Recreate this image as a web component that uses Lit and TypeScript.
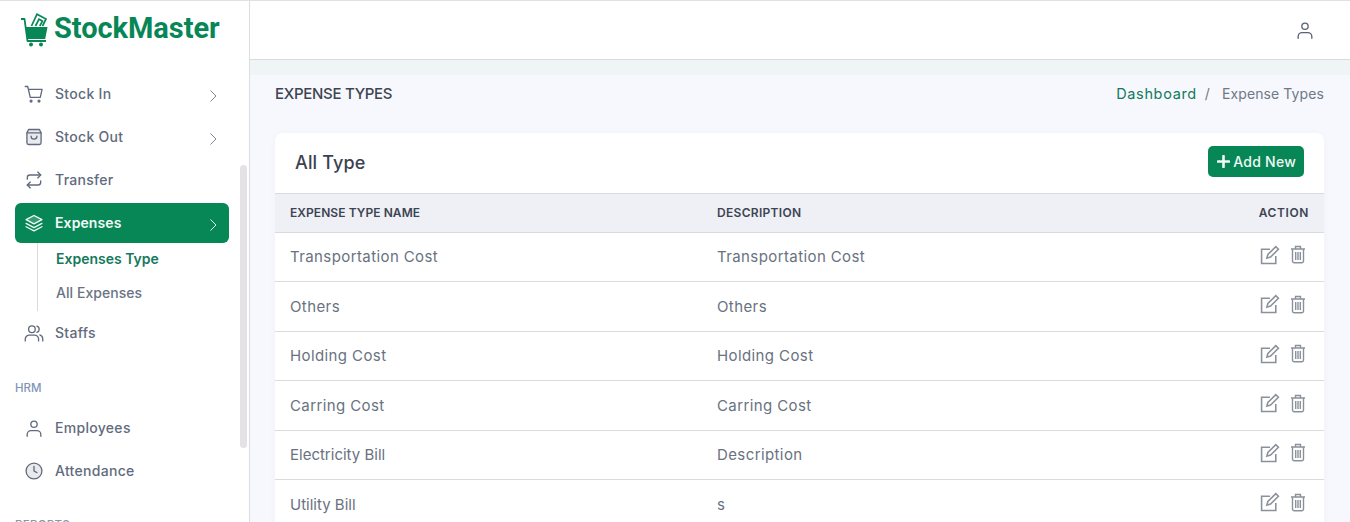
import { LitElement, html, css, svg } from "lit";
import { customElement } from "lit/decorators.js";

const s = (body: unknown, size = 20) => html`<svg width=${size} height=${size} viewBox="0 0 24 24" fill="none" stroke="currentColor" stroke-width="1.6" stroke-linecap="round" stroke-linejoin="round">${body}</svg>`;

const icons: Record<string, unknown> = {
  cart: svg`<path d="M1.500 3h3l3 13h12l2.200-9.500H5.400"/><circle cx="8.500" cy="20.500" r="1.100" fill="currentColor"/><circle cx="18" cy="20.500" r="1.100" fill="currentColor"/>`,
  bag: svg`<path d="M5.500 3h13l2 4v12a2 2 0 0 1-2 2h-13a2 2 0 0 1-2-2V7z" fill="currentColor" fill-opacity=".14"/><path d="M3.500 7h17"/><path d="M8.500 11a3.500 3.500 0 0 0 7 0"/>`,
  swap: svg`<path d="M4 11V9a3 3 0 0 1 3-3h13"/><path d="M16.500 2.500 20 6l-3.500 3.500"/><path d="M20 13v2a3 3 0 0 1-3 3H4"/><path d="M7.500 14.500 4 18l3.500 3.500"/>`,
  layers: svg`<path d="M12 3 2.500 8l9.500 5 9.500-5z" fill="currentColor" fill-opacity=".2"/><path d="m2.500 12.500 9.500 5 9.500-5"/><path d="m2.500 16.500 9.500 5 9.500-5"/>`,
  users: svg`<circle cx="9.500" cy="7.500" r="4"/><path d="M1.500 21.500v-2a5 5 0 0 1 5-5h6a5 5 0 0 1 5 5v2"/><path d="M15.500 3.700a4 4 0 0 1 0 7.600"/><path d="M19 14.300a5 5 0 0 1 3.500 4.700v2.500"/>`,
  user: svg`<circle cx="12" cy="7.500" r="3.800"/><path d="M3.800 22v-2a4.800 4.800 0 0 1 4.800-4.800h6.800a4.800 4.800 0 0 1 4.800 4.800v2"/>`,
  clock: svg`<circle cx="12" cy="12" r="9.500" fill="currentColor" fill-opacity=".14"/><path d="M12 6.500V12l3.500 2"/>`,
  chev: svg`<path d="m9 5 7 7-7 7"/>`,
};

const rows = [
  ["Transportation Cost", "Transportation Cost", false],
  ["Others", "Others", false],
  ["Holding Cost", "Holding Cost", false],
  ["Carring Cost", "Carring Cost", false],
  ["Electricity Bill", "Description", true],
  ["Utility Bill", "s", true],
];

@customElement("app-root")
export class AppRoot extends LitElement {
  static styles = css`
    :host { display: block; height: 522px; overflow: hidden; font-family: "Inter", "Liberation Sans", sans-serif; color: #5d6779; background: #f6f8fd; }
    .app { display: flex; height: 522px; border-top: 1px solid #dfe1e3; box-sizing: border-box; }
    .side { position: relative; width: 250px; flex: none; background: #fff; border-right: 1px solid #dcdde1; box-sizing: border-box; overflow: hidden; }
    .logo { display: flex; align-items: center; gap: 4px; padding: 9px 0 0 20px; height: 41px; color: #078656; }
    .logo span { font: 700 29px/1 "Roboto", sans-serif; letter-spacing: -.05px; transform: translateY(-2px); }
    .nav { display: flex; flex-direction: column; padding: 23px 20px 0 15px; }
    .item { display: flex; align-items: center; height: 40px; margin-bottom: 3px; padding: 0 10px 0 9px; border-radius: 6px; font-size: 14px; font-weight: 500; letter-spacing: .3px; color: #616b7d; }
    .item .ico { display: flex; width: 20px; margin-right: 11px; }
    .item .lab { flex: 1; transform: translateY(-1px); }
    .item .chev { display: flex; margin: 3px -3px 0 0; color: #7a8494; }
    .item .chev svg { stroke-width: 1.300; }
    .item.active { background: #078656; color: #f2fbf7; font-weight: 600; letter-spacing: .1px; margin-bottom: 0; }
    .item.active .chev { color: #eef8f4; }
    .sub { display: flex; flex-direction: column; margin: 0 0 2px 22px; padding: 0 0 0 18px; height: 68px; border-left: 1px solid #d9dbdf; box-sizing: border-box; font-size: 14px; font-weight: 500; letter-spacing: .05px; }
    .sub div { height: 34px; line-height: 31px; color: #697384; }
    .sub .cur { color: #16795c; font-weight: 600; letter-spacing: 0; }
    .cap { font-size: 11.500px; font-weight: 500; color: #7f95b8; height: 15px; line-height: 15px; margin: 25px 0 12px; }
    .cap.low { margin: 24px 0 0; color: #8b95a5; letter-spacing: .3px; }
    .thumb { position: absolute; left: 240px; top: 164px; width: 7px; height: 283px; border-radius: 4px; background: #e4e2e5; }
    .main { flex: 1; min-width: 0; display: flex; flex-direction: column; }
    .top { height: 58px; flex: none; background: #fff; border-bottom: 1px solid #d8dadc; display: flex; align-items: center; justify-content: flex-end; padding-right: 35px; color: #596274; }
    .body { flex: 1; background: linear-gradient(#eef5f4 0, #eef5f4 15px, #f6f8fd 15px); padding: 0 26px 0 25px; }
    .crumbs { display: flex; align-items: center; justify-content: space-between; height: 40px; margin-top: 13px; }
    .crumbs h1 { margin: 0; font-size: 15px; font-weight: 500; letter-spacing: -.3px; color: #3d4452; }
    .path { display: flex; align-items: baseline; gap: 10px; font-size: 14px; letter-spacing: .1px; color: #6f7887; }
    .path a { color: #14795b; font-size: 14.500px; letter-spacing: .65px; margin-right: -2px; }
    .path .sep { margin-right: 2px; }
    .card { margin-top: 20px; background: #fff; border-radius: 8px 8px 0 0; box-shadow: 0 1px 6px rgba(120,130,160,.06); }
    .head { display: flex; align-items: center; justify-content: space-between; height: 60px; padding: 0 20px; }
    .head h2 { margin: 0 0 1px; font-size: 18px; font-weight: 500; letter-spacing: .15px; color: #3b4150; }
    .btn { display: flex; align-items: center; gap: 3px; height: 31px; margin-bottom: 3px; padding: 0 8px 0 9px; border-radius: 5px; background: #078656; color: #f1faf6; font-size: 14px; font-weight: 500; letter-spacing: .25px; }
    .grid { display: grid; grid-template-columns: 427px 1fr 120px; padding: 0 15px; align-items: center; box-sizing: border-box; }
    .th { height: 39.500px; padding-bottom: 1px; background: #eef0f6; border-top: 1px solid #d8dadd; border-bottom: 1px solid #d8dadd; font-size: 12px; font-weight: 600; letter-spacing: .3px; color: #3d4452; }
    .th .name { letter-spacing: .07px; }
    .th .right { letter-spacing: .6px; }
    .tr { height: 49.500px; border-bottom: 1px solid #d9dbde; font-size: 15px; letter-spacing: .4px; color: #69727f; }
    .tr .narrow { letter-spacing: 0; }
    .right { text-align: right; }
    .acts { display: flex; justify-content: flex-end; align-items: center; gap: 10px; margin: -4px 3px 0 0; color: #8b919b; }
    .acts svg { display: block; }
  `;

  private item(icon: string, label: string, chev = false, active = false) {
    return html`<div class="item ${active ? "active" : ""}">
      <span class="ico">${s(icons[icon])}</span><span class="lab">${label}</span>
      ${chev ? html`<span class="chev">${s(icons.chev, 18)}</span>` : ""}
    </div>`;
  }

  render() {
    return html`<div class="app">
      <aside class="side">
        <div class="logo">
          <svg width="30" height="36" viewBox="0 0 30 36" aria-hidden="true">
            <path d="M1 6h3.500l3 22H26" fill="none" stroke="currentColor" stroke-width="1.800" stroke-linejoin="round"/>
            <path d="M5.500 14H27.500l-2.300 12H7.500z" fill="currentColor"/>
            <path d="M11.500 13 17 1.200l9 4.800-3.500 7M15.500 13l3.500-6.800 3.400 1.900-2.600 4.900" fill="none" stroke="currentColor" stroke-width="1.700"/>
            <circle cx="11" cy="31.500" r="2" fill="currentColor"/><circle cx="21" cy="31.500" r="2" fill="currentColor"/>
          </svg>
          <span>StockMaster</span>
        </div>
        <nav class="nav">
          ${this.item("cart", "Stock In", true)}
          ${this.item("bag", "Stock Out", true)}
          ${this.item("swap", "Transfer")}
          ${this.item("layers", "Expenses", true, true)}
          <div class="sub"><div class="cur">Expenses Type</div><div>All Expenses</div></div>
          ${this.item("users", "Staffs")}
          <div class="cap">HRM</div>
          ${this.item("user", "Employees")}
          ${this.item("clock", "Attendance")}
          <div class="cap low">REPORTS</div>
        </nav>
        <div class="thumb"></div>
      </aside>
      <main class="main">
        <header class="top">${s(icons.user, 20)}</header>
        <section class="body">
          <div class="crumbs"><h1>EXPENSE TYPES</h1><div class="path"><a>Dashboard</a><span class="sep">/</span><span>Expense Types</span></div></div>
          <div class="card">
            <div class="head"><h2>All Type</h2>
              <div class="btn"><svg width="13" height="13" viewBox="0 0 13 13"><path d="M6.500 1v11M1 6.500h11" stroke="currentColor" stroke-width="2.600" stroke-linecap="round"/></svg>Add New</div>
            </div>
            <div class="grid th"><span class="name">EXPENSE TYPE NAME</span><span>DESCRIPTION</span><span class="right">ACTION</span></div>
            ${rows.map((r) => html`<div class="grid tr"><span class=${r[2] ? "narrow" : ""}>${r[0]}</span><span class=${r[2] && r[1] === "s" ? "narrow" : ""}>${r[1]}</span>
              <div class="acts">
                <svg width="20" height="20" viewBox="0 0 19 19" fill="none" stroke="currentColor" stroke-width="1.500"><path d="M15 10.500V17.500H1.500V4H9.500"/><path d="M6.500 12.500l1-3.500L15 1.500l2.500 2.500L10 11.500z"/></svg>
                <svg width="16" height="19" viewBox="0 0 16 19" fill="none" stroke="currentColor" stroke-width="1.400"><path d="M1 4h14M5.500 4V1.500h5V4M2.500 4v12a1.800 1.800 0 0 0 1.800 1.800h7.400a1.800 1.800 0 0 0 1.800-1.800V4M5.700 7v8M8 7v8M10.300 7v8"/></svg>
              </div></div>`)}
          </div>
        </section>
      </main>
    </div>`;
  }
}
